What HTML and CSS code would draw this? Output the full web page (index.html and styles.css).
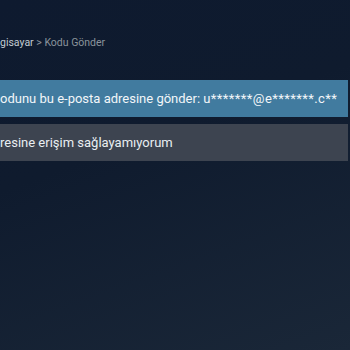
FILE: index.html
```html
<html>

<head>
  <link rel="stylesheet" href="styles.css">
</head>

<body>
  <div id="page">
    <div class="breadcrumbs">
      <span class="crumb">gisayar</span>
      <span class="sep">&gt;</span>
      <span class="current">Kodu Gönder</span>
    </div>
    <div class="wizard">
      <a class="wizard-button active">odunu bu e-posta adresine gönder: <span class="masked">u*******@e*******.c**</span></a>
      <a class="wizard-button">resine erişim sağlayamıyorum</a>
    </div>
  </div>
</body>

</html>
```

FILE: styles.css
```css
body {
  margin: 0;
  padding: 0;
  height: 350px;
  overflow: hidden;
  font-family: Roboto, 'Liberation Sans', Arial, sans-serif;
  background: linear-gradient(160deg, #0e1a2f 0%, #0f1b2e 40%, #1a2738 100%);
}

#page {
  padding: 35px 2px 0 0;
}

.breadcrumbs {
  font-size: 10.5px;
  line-height: 16px;
  color: #8a939c;
  white-space: nowrap;
}

.breadcrumbs .crumb {
  color: #c3ccd4;
}

.wizard {
  margin-top: 29px;
  display: flex;
  flex-direction: column;
  gap: 7px;
}

.wizard-button {
  display: block;
  height: 37px;
  line-height: 37px;
  font-size: 13px;
  color: #e9eef2;
  background: #3d4450;
  white-space: nowrap;
  overflow: hidden;
}

.wizard-button.active {
  background: #417b9f;
  color: #f2f6f9;
}

.masked {
  letter-spacing: 0.4px;
}
```
